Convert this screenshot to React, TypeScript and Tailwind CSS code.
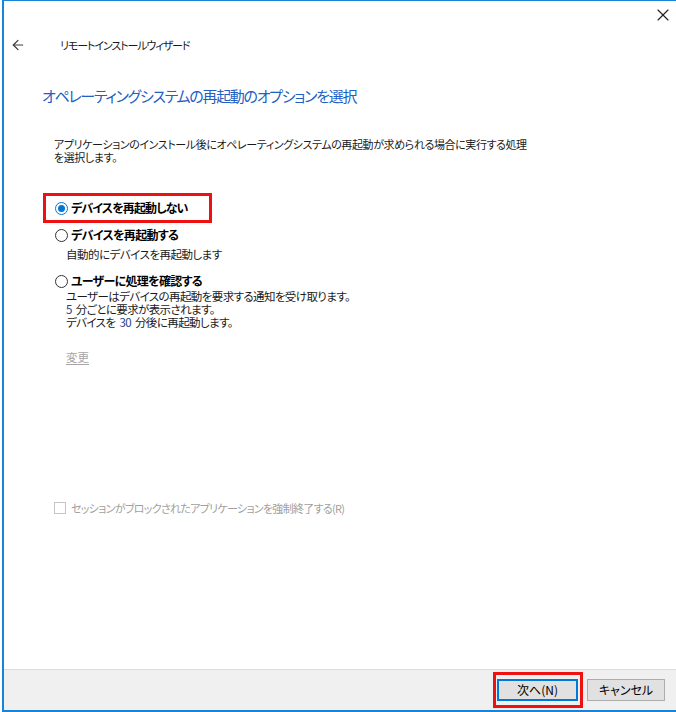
import { ArrowLeft, X } from "lucide-react";

const FONT = "font-['Noto_Sans_CJK_JP','Noto_Sans',sans-serif] [font-feature-settings:'palt']";

function Radio({ checked }: { checked?: boolean }) {
  return (
    <span
      className={`flex h-[13px] w-[13px] shrink-0 items-center justify-center rounded-full border bg-white ${
        checked ? "border-[#0078d7]" : "border-[#333333]"
      }`}
    >
      {checked && <span className="h-[7px] w-[7px] rounded-full bg-[#0078d7]" />}
    </span>
  );
}

export default function App() {
  return (
    <div className={`ml-[2px] flex h-[712px] w-[674px] flex-col border-t border-b-2 border-l-2 border-[#1883d7] bg-white text-[#000000] ${FONT}`}>
      <div className="flex h-[30px] shrink-0 justify-end pt-[4px] pr-[3px]">
        <X className="h-[20px] w-[20px] text-[#222222]" strokeWidth={1.4} />
      </div>

      <div className="flex h-[28px] shrink-0 items-center">
        <ArrowLeft className="ml-[6px] h-[16px] w-[16px] text-[#3a3a3a]" strokeWidth={1.8} />
        <span className="ml-[34px] text-[11px] leading-[16px] tracking-[-1.1px] text-[#1a1a1a]">リモートインストールウィザード</span>
      </div>

      <div className="mt-[23px] flex h-[28px] shrink-0 items-center pl-[38px]">
        <h1 className="text-[15px] leading-[20px] font-normal tracking-[-1.3px] text-[#2160c4]">
          オペレーティングシステムの再起動のオプションを選択
        </h1>
      </div>

      <p className="mt-[28px] pl-[50px] text-[11px] leading-[13px] tracking-[-0.4px] text-[#1a1a1a]">
        アプリケーションのインストール後にオペレーティングシステムの再起動が求められる場合に実行する処理
        <br />
        を選択します。
      </p>

      <div className="mt-[29px] ml-[39px] flex h-[30px] w-[169px] shrink-0 items-center gap-[3px] border-[3px] border-[#ee1111] pl-[9px]">
        <Radio checked />
        <span className="text-[12px] leading-[16px] font-bold tracking-[-0.9px]">デバイスを再起動しない</span>
      </div>

      <div className="mt-[2px] flex h-[20px] shrink-0 items-center gap-[3px] pl-[51px]">
        <Radio />
        <span className="text-[12px] leading-[16px] font-bold tracking-[-0.7px]">デバイスを再起動する</span>
      </div>
      <div className="flex h-[20px] shrink-0 items-center pl-[62px] text-[11.5px] tracking-[-0.5px] text-[#1a1a1a]">
        自動的にデバイスを再起動します
      </div>

      <div className="mt-[7px] flex h-[18px] shrink-0 items-center gap-[3px] pl-[51px]">
        <Radio />
        <span className="text-[12px] leading-[16px] font-bold tracking-[-0.7px]">ユーザーに処理を確認する</span>
      </div>
      <div className="pl-[62px] text-[11.5px] leading-[13px] tracking-[-0.6px] text-[#1a1a1a]">
        <div>ユーザーはデバイスの再起動を要求する通知を受け取ります。</div>
        <div>
          <span className="mr-[4px] text-[#24418a]">5</span>分ごとに要求が表示されます。
        </div>
        <div>
          デバイスを<span className="mx-[4px] text-[#24418a]">30</span>分後に再起動します。
        </div>
      </div>

      <div className="mt-[21px] flex h-[16px] shrink-0 items-center pl-[62px]">
        <span className="text-[11.5px] text-[#a6a6a6] underline underline-offset-2">変更</span>
      </div>

      <div className="mt-[134px] flex h-[16px] shrink-0 items-center gap-[5px] pl-[50px]">
        <span className="h-[12px] w-[12px] border border-[#c4c4c4] bg-white" />
        <span className="text-[11px] tracking-[-0.7px] text-[#a0a0a0]">セッションがブロックされたアプリケーションを強制終了する(R)</span>
      </div>

      <div className="flex-1" />

      <div className="flex h-[41px] shrink-0 items-start justify-end border-t border-[#dcdcdc] bg-[#f0f0f0] pr-[11px]">
        <div className="mt-[2px] border-[3px] border-[#ee1111] pt-[4px] pr-[2px] pb-[4px] pl-[1px]">
          <button className="flex h-[22px] w-[81px] items-center justify-center border-2 border-[#0078d7] bg-[#e1e1e1] text-[12px]">
            次へ(N)
          </button>
        </div>
        <button className="mt-[9px] ml-[4px] flex h-[22px] w-[78px] items-center justify-center border border-[#adadad] bg-[#e1e1e1] text-[12px]">
          キャンセル
        </button>
      </div>
    </div>
  );
}
